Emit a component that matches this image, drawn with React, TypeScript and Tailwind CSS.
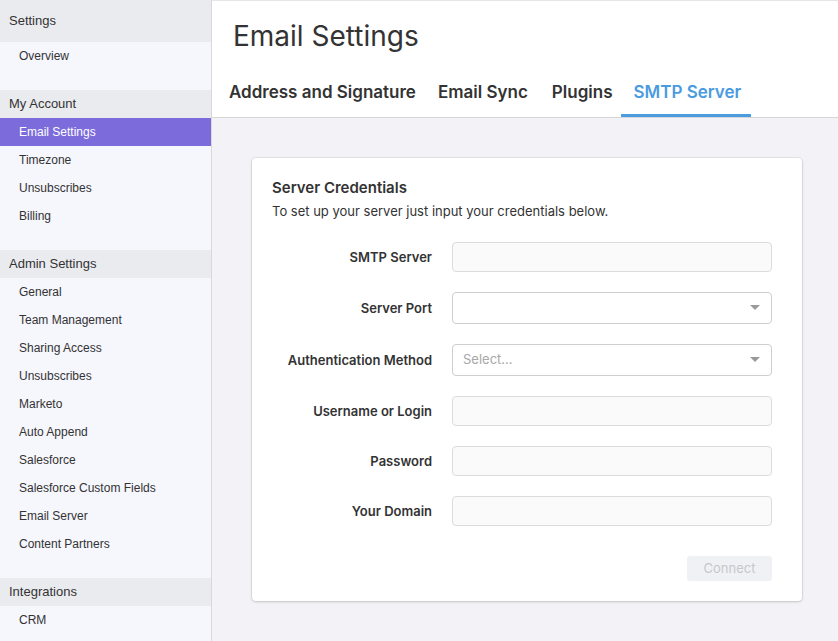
import React from "react";

const sections: { title: string; items: string[]; first?: boolean }[] = [
  { title: "Settings", items: ["Overview"], first: true },
  { title: "My Account", items: ["Email Settings", "Timezone", "Unsubscribes", "Billing"] },
  {
    title: "Admin Settings",
    items: [
      "General",
      "Team Management",
      "Sharing Access",
      "Unsubscribes",
      "Marketo",
      "Auto Append",
      "Salesforce",
      "Salesforce Custom Fields",
      "Email Server",
      "Content Partners",
    ],
  },
  { title: "Integrations", items: ["CRM"] },
];

const tabs: { t: string; active: boolean; cls: string }[] = [
  { t: "Address and Signature", active: false, cls: "px-[11px]" },
  { t: "Email Sync", active: false, cls: "px-[11px]" },
  { t: "Plugins", active: false, cls: "pl-[13px] pr-[9px]" },
  { t: "SMTP Server", active: true, cls: "pl-[12px] pr-[10px]" },
];

function Caret() {
  return (
    <svg width="10" height="6" viewBox="0 0 10 6" className="absolute right-[11px] top-1/2 -translate-y-1/2">
      <path d="M0 0 L10 0 L5 5 Z" fill="#9a9a9a" />
    </svg>
  );
}

function Field({ label, kind, placeholder }: { label: string; kind: "input" | "select"; placeholder?: string }) {
  return (
    <div className="flex items-center">
      <div className="w-[180px] pr-[20px] pt-[1px] text-right text-[13px] font-semibold text-[#333]">{label}</div>
      {kind === "input" ? (
        <div className="h-[30px] w-[320px] rounded-[4px] border border-[#dcdcdc] bg-[#fafafa]" />
      ) : (
        <div className="relative flex h-[32px] w-[320px] items-center rounded-[4px] border border-[#cfcfcf] bg-white pl-[10px] text-[13px] text-[#a8a8a8]">
          {placeholder}
          <Caret />
        </div>
      )}
    </div>
  );
}

export default function App() {
  return (
    <div className="flex h-[641px] w-[838px] overflow-hidden bg-white">
      <aside className="h-full w-[212px] shrink-0 border-r border-[#d9d9d9] bg-[#f6f6fd] font-['Liberation_Sans',Arial,sans-serif]">
        {sections.map((s, i) => (
          <div key={s.title} className={i > 0 ? "mt-[20px]" : ""}>
            <div
              className={`flex items-center bg-[#eaebef] pl-[9px] text-[13px] text-[#333] ${
                s.first ? "h-[42px]" : "h-[28px]"
              }`}
            >
              {s.title}
            </div>
            {s.items.map((it) => {
              const active = s.title === "My Account" && it === "Email Settings";
              return (
                <div
                  key={it}
                  className={`flex h-[28px] items-center pl-[19px] text-[12px] ${
                    active ? "bg-[#7b6bdb] text-white" : "text-[#333]"
                  }`}
                >
                  {it}
                </div>
              );
            })}
          </div>
        ))}
      </aside>
      <main className="flex h-full flex-1 flex-col bg-[#f3f3f7] font-['Inter',sans-serif]">
        <div className="h-[118px] shrink-0 border-b border-[#d6d6d6] border-t border-t-[#e6e6e6] bg-white">
          <h1 className="pl-[21px] pt-[15px] text-[28px] font-normal leading-[40px] text-[#333]">
            Email Settings
          </h1>
          <div className="mt-[19px] flex pl-[6px]">
            {tabs.map((tab) => (
              <div
                key={tab.t}
                className={`flex h-[42px] items-start pt-[5px] text-[17px] font-semibold ${tab.cls} ${
                  tab.active ? "border-b-[3px] border-[#4a9be0] text-[#4a9be0]" : "text-[#333]"
                }`}
              >
                {tab.t}
              </div>
            ))}
          </div>
        </div>
        <div className="pl-[40px] pt-[40px]">
          <div className="w-[550px] rounded-[4px] bg-white px-[20px] pb-[20px] pt-[20px] shadow-[0_0_0_1px_rgba(0,0,0,0.06),0_1px_3px_rgba(0,0,0,0.15)]">
            <div className="text-[15px] font-semibold leading-[20px] text-[#333]">Server Credentials</div>
            <div className="mt-[4px] text-[13px] leading-[18px] text-[#333]">
              To set up your server just input your credentials below.
            </div>
            <div className="mt-[22px] flex flex-col gap-[20px]">
              <Field label="SMTP Server" kind="input" />
              <Field label="Server Port" kind="select" />
              <Field label="Authentication Method" kind="select" placeholder="Select..." />
              <Field label="Username or Login" kind="input" />
              <Field label="Password" kind="input" />
              <Field label="Your Domain" kind="input" />
            </div>
            <div className="mt-[30px] flex justify-end pr-[10px]">
              <div className="flex h-[25px] w-[85px] items-center justify-center rounded-[3px] bg-[#f0f1f4] text-[13px] text-[#c6c7cc]">
                Connect
              </div>
            </div>
          </div>
        </div>
      </main>
    </div>
  );
}
